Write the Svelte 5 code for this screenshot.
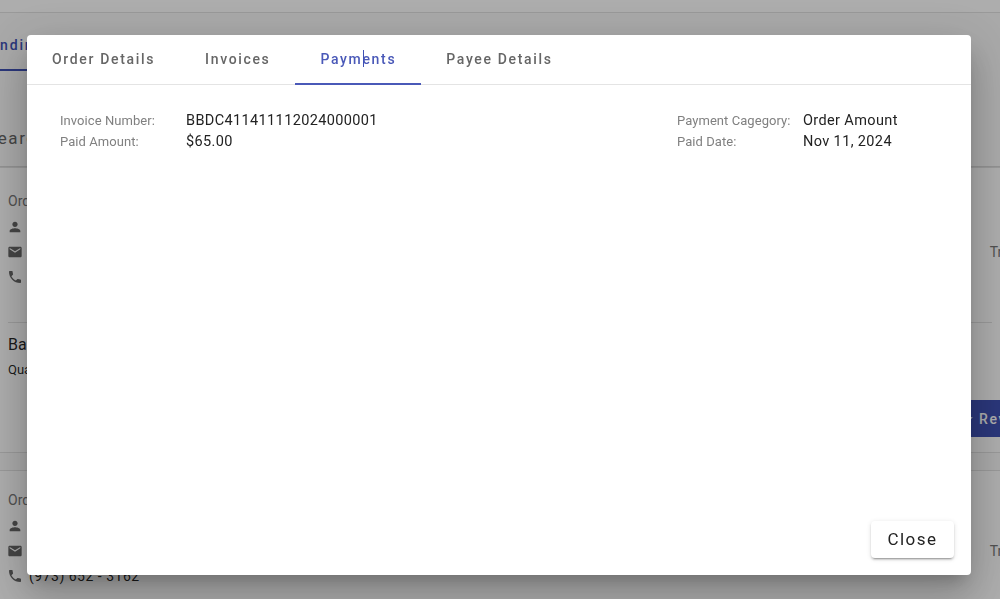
<script>
	const tabs = ['Order Details', 'Invoices', 'Payments', 'Payee Details'];
	let active = $state(2);

	const phone = '(973) 652 - 3162';
</script>

{#snippet contact()}
	<div class="contact">
		<div class="contact-main">
			<div class="order-no">Order #BBDC4114</div>
			<div class="contact-row">
				<svg viewBox="0 0 24 24"><path d="M12 12c2.200 0 4-1.800 4-4s-1.800-4-4-4-4 1.800-4 4 1.800 4 4 4zm0 2c-2.700 0-8 1.300-8 4v2h16v-2c0-2.700-5.300-4-8-4z" /></svg>
				<span>Barbara Dean</span>
			</div>
			<div class="contact-row">
				<svg viewBox="0 0 24 24"><path d="M20 4H4c-1.100 0-2 .9-2 2v12c0 1.100.9 2 2 2h16c1.100 0 2-.9 2-2V6c0-1.100-.9-2-2-2zm0 4-8 5-8-5V6l8 5 8-5v2z" /></svg>
				<span>b.dean@mail.com</span>
			</div>
			<div class="contact-row">
				<svg viewBox="0 0 24 24"><path d="M6.600 10.800c1.400 2.800 3.800 5.100 6.600 6.600l2.200-2.200c.3-.3.700-.4 1-.2 1.100.4 2.300.6 3.600.6.600 0 1 .4 1 1V20c0 .6-.4 1-1 1C10.600 21 3 13.400 3 4c0-.6.400-1 1-1h3.500c.6 0 1 .4 1 1 0 1.300.2 2.500.6 3.600.1.300 0 .7-.2 1l-2.300 2.200z" /></svg>
				<span>{phone}</span>
			</div>
		</div>
		<div class="tracking">Tracking</div>
	</div>
{/snippet}

<div class="page">
	<div class="topbar"></div>
	<div class="page-tabs"><span class="page-tab">Pending</span></div>
	<div class="search">Search</div>

	<section class="card first">
		{@render contact()}
		<div class="item">
			<div class="item-main">
				<div class="item-name">Backpack</div>
				<div class="item-qty">Quantity: 1</div>
			</div>
			<button class="review">
				<svg viewBox="0 0 24 24"><path d="M12 17.300 18.200 21l-1.600-7L22 9.200l-7.200-.6L12 2 9.200 8.600 2 9.200 7.500 14l-1.700 7z" /></svg>
				Review
			</button>
		</div>
	</section>

	<section class="card second">
		{@render contact()}
	</section>
</div>

<div class="backdrop"></div>

<div class="dialog" role="dialog">
	<div class="tabs">
		{#each tabs as tab, i}
			<button class="tab" class:active={active === i} onclick={() => (active = i)}>{tab}</button>
		{/each}
	</div>
	<div class="content">
		<div class="details">
			<div class="col">
				<div class="row"><span class="label">Invoice Number:</span><span class="value">BBDC411411112024000001</span></div>
				<div class="row"><span class="label">Paid Amount:</span><span class="value">$65.00</span></div>
			</div>
			<div class="col right">
				<div class="row"><span class="label">Payment Cagegory:</span><span class="value">Order Amount</span></div>
				<div class="row"><span class="label">Paid Date:</span><span class="value">Nov 11, 2024</span></div>
			</div>
		</div>
	</div>
	<div class="actions">
		<button class="close">Close</button>
	</div>
	<div class="caret"></div>
</div>

<style>
	:global(body) {
		margin: 0;
		overflow: hidden;
		font-family: Roboto, "Liberation Sans", sans-serif;
	}

	.page {
		width: 1000px;
		height: 599px;
		overflow: hidden;
		background: #fafafa;
		color: rgba(0, 0, 0, 0.87);
	}

	.topbar {
		height: 12px;
		border-bottom: 1px solid #e2e2e2;
		background: #fff;
	}

	.page-tabs {
		height: 58px;
		display: flex;
		align-items: flex-end;
		margin-left: -45px;
	}

	.page-tab {
		padding: 0 40px 16px 25px;
		border-bottom: 2px solid #3f51b5;
		color: #3f51b5;
		font-size: 14px;
		font-weight: 500;
		letter-spacing: 1.85px;
	}

	.search {
		height: 96px;
		box-sizing: border-box;
		padding-top: 57px;
		margin-left: -14px;
		border-bottom: 1px solid #d8d8d8;
		font-size: 17px;
		line-height: 20px;
		letter-spacing: 1.6px;
		color: #666;
	}

	.card {
		background: #fff;
		padding: 0 8px;
		border-top: 1px solid #e2e2e2;
		border-bottom: 1px solid #e2e2e2;
	}

	.card.first {
		height: 286px;
		margin-bottom: 17px;
		box-sizing: border-box;
	}

	.contact {
		display: flex;
		justify-content: space-between;
		height: 155px;
		box-sizing: border-box;
		padding-top: 25px;
		border-bottom: 1px solid #e2e2e2;
	}

	.second .contact {
		padding-top: 21px;
	}

	.order-no {
		font-size: 14px;
		line-height: 16px;
		color: #777;
		margin-bottom: 5px;
	}

	.contact-row {
		display: flex;
		align-items: center;
		gap: 6px;
		height: 25px;
		font-size: 14px;
		letter-spacing: 0.5px;
	}

	.contact-row svg {
		width: 16px;
		height: 16px;
		margin-left: -1px;
		fill: #666;
		flex: none;
	}

	.tracking {
		margin-top: 51px;
		margin-right: -51px;
		font-size: 14px;
		line-height: 16px;
		color: #777;
	}

	.item {
		display: flex;
		justify-content: space-between;
		align-items: flex-start;
		padding-top: 12px;
	}

	.item-name {
		font-size: 16px;
		line-height: 20px;
		margin-bottom: 6px;
	}

	.item-qty {
		font-size: 13px;
		line-height: 18px;
	}

	.review {
		display: flex;
		align-items: center;
		gap: 5px;
		margin-top: 65px;
		margin-right: -40px;
		width: 120px;
		height: 37px;
		padding: 0 0 0 48px;
		border: 0;
		border-radius: 4px;
		background: #3f51b5;
		color: #fff;
		font: 500 14px Roboto, sans-serif;
		letter-spacing: 1.65px;
	}

	.review svg {
		width: 14px;
		height: 14px;
		fill: #fff;
		flex: none;
	}

	.backdrop {
		position: fixed;
		inset: 0;
		background: rgba(0, 0, 0, 0.32);
	}

	.dialog {
		position: fixed;
		left: 27px;
		top: 35px;
		width: 944px;
		height: 540px;
		display: flex;
		flex-direction: column;
		background: #fff;
		border-radius: 4px;
		box-shadow: 0 11px 15px -7px rgba(0, 0, 0, 0.2), 0 24px 38px 3px rgba(0, 0, 0, 0.14), 0 9px 46px 8px rgba(0, 0, 0, 0.12);
	}

	.tabs {
		display: flex;
		height: 49px;
		border-bottom: 1px solid #e4e4e4;
	}

	.tab {
		padding: 0 25px;
		border: 0;
		border-bottom: 2px solid transparent;
		background: none;
		font: 500 14px Roboto, sans-serif;
		letter-spacing: 1.66px;
		color: #666;
		margin-bottom: -1px;
		cursor: pointer;
	}

	.tab.active {
		color: #4a59b8;
		border-bottom-color: #4a59b8;
	}

	.content {
		flex: 1;
		padding: 25px 33px;
	}

	.details {
		display: flex;
		justify-content: space-between;
	}

	.col.right {
		width: 261px;
	}

	.row {
		display: flex;
		align-items: center;
		height: 21px;
	}

	.label {
		width: 126px;
		flex: none;
		font-size: 13px;
		color: #808080;
		letter-spacing: 0.06px;
	}

	.value {
		font-size: 14.5px;
		letter-spacing: 0.37px;
		color: #222;
	}

	.actions {
		display: flex;
		justify-content: flex-end;
		padding: 0 17px 17px 0;
	}

	.close {
		width: 83px;
		height: 37px;
		padding: 0 0 1px;
		border: 0;
		border-radius: 4px;
		background: #fff;
		color: #222;
		font: 400 17px Roboto, sans-serif;
		letter-spacing: 1.5px;
		box-shadow: 0 3px 1px -2px rgba(0, 0, 0, 0.2), 0 2px 2px 0 rgba(0, 0, 0, 0.14), 0 1px 5px 0 rgba(0, 0, 0, 0.12);
		cursor: pointer;
	}

	.caret {
		position: absolute;
		left: 336px;
		top: 15px;
		width: 1px;
		height: 17px;
		background: #3f51b5;
	}
</style>
